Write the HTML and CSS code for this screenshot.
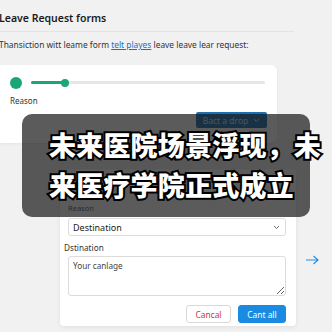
FILE: index.html
```html
<!DOCTYPE html>
<html lang="zh">
<head>
<meta charset="utf-8">
<link rel="stylesheet" href="styles.css">
</head>
<body>
<div class="page">
  <header class="head">
    <h1 class="title">Leave Request forms</h1>
    <p class="intro">Thansiction witt leame form <a class="link" href="#">telt playes</a> leave leave lear request:</p>
  </header>

  <section class="card">
    <div class="slider">
      <span class="dot"></span>
      <div class="track"><div class="fill"></div><span class="thumb"></span></div>
    </div>
    <div class="card-label">Reason</div>
    <div class="card-foot">
      <button class="drop-btn">Bact a drop <svg class="chev" width="7" height="5" viewBox="0 0 7 5"><path d="M1 1l2.5 2.5L6 1" fill="none" stroke="currentColor" stroke-width="1"/></svg></button>
    </div>
  </section>

  <div class="modal-row">
    <section class="modal">
      <div class="field-label">Reason</div>
      <div class="select">
        <span>Destination</span>
        <svg width="7" height="5" viewBox="0 0 7 5"><path d="M1 1l2.5 2.5L6 1" fill="none" stroke="#666" stroke-width="0.9"/></svg>
      </div>
      <div class="field-label dark">Dstination</div>
      <textarea class="area">Your canlage</textarea>
      <div class="actions">
        <button class="btn cancel">Cancal</button>
        <button class="btn primary">Cant all</button>
      </div>
    </section>
    <svg class="arrow" width="14" height="10" viewBox="0 0 14 10"><path d="M1 5h12M8.5 1L13 5l-4.5 4" fill="none" stroke="#2a8fe0" stroke-width="1.2"/></svg>
  </div>

  <div class="overlay"></div>
  <div class="caption">
    <span class="cap-line">未来医院场景浮现，未</span>
    <span class="cap-line">来医疗学院正式成立</span>
  </div>
</div>
</body>
</html>
```

FILE: styles.css
```css
* { box-sizing: border-box; }
html, body { margin: 0; padding: 0; }
body {
  width: 332px;
  height: 332px;
  overflow: hidden;
  background: #f1f1f1;
  font-family: "Noto Sans", "Open Sans", sans-serif;
  color: #222;
}
.page { position: relative; width: 332px; height: 332px; }

.head { width: 295px; margin-left: -1px; }
.title {
  margin: 0;
  padding-top: 11px;
  padding-bottom: 6px;
  font-size: 10.5px;
  font-weight: 600;
  line-height: 14px;
  border-bottom: 1px solid #e4e4e4;
  color: #1b1b1b;
}
.intro {
  margin: 0;
  padding-top: 7px;
  font-size: 8.4px;
  line-height: 12px;
  color: #333;
}
.link { color: #1b70c4; text-decoration: underline; }

.card {
  margin-top: 14px;
  width: 277px;
  height: 78px;
  background: #fff;
  border-radius: 0 6px 6px 0;
  box-shadow: 0 1px 3px rgba(0,0,0,0.06);
  padding: 11px 12px 0 10px;
  display: flex;
  flex-direction: column;
}
.slider { display: flex; align-items: center; gap: 9px; height: 13px; }
.dot { width: 12px; height: 12px; border-radius: 50%; background: #1ba67a; }
.track { position: relative; flex: 1; height: 3px; background: #e6e6e6; border-radius: 2px; }
.fill { width: 35px; height: 3px; background: #1ba67a; border-radius: 2px; }
.thumb { position: absolute; left: 30px; top: -2.5px; width: 8px; height: 8px; border-radius: 50%; background: #1ba67a; }
.card-label { margin-top: 7px; font-size: 8px; color: #333; line-height: 10px; }
.card-foot { display: flex; justify-content: flex-end; margin-top: 6px; }
.drop-btn {
  width: 71px; height: 16px;
  border: 0; border-radius: 2px;
  background: #1d6fb0;
  color: #cfe3f3;
  font-family: inherit;
  font-size: 8.5px;
  display: flex; align-items: center; justify-content: center; gap: 5px;
  padding: 0;
  margin-right: -2px;
}
.chev { margin-top: 1px; }

.modal-row { display: flex; margin-top: 26px; margin-left: 60px; gap: 9px; }
.modal {
  width: 236px;
  height: 157px;
  background: #fff;
  border-radius: 4px;
  box-shadow: 0 1px 4px rgba(0,0,0,0.08);
  padding: 34px 10px 0 8px;
  display: flex;
  flex-direction: column;
}
.field-label { font-size: 7.5px; line-height: 10px; color: #555; }
.field-label.dark { color: #333; font-size: 8.2px; margin-top: 7px; margin-left: -4px; }
.select {
  margin-top: 5px;
  height: 18px;
  border: 1px solid #dcdcdc;
  border-radius: 3px;
  display: flex; align-items: center; justify-content: space-between;
  padding: 0 5px 0 4px;
  font-size: 9px;
  color: #222;
}
.area {
  margin-top: 3px;
  width: 218px;
  height: 40px;
  border: 1px solid #dcdcdc;
  border-radius: 3px;
  padding: 3px 4px;
  font-family: inherit;
  font-size: 8.2px;
  line-height: 11px;
  color: #444;
  resize: vertical;
  outline: none;
}
.actions { display: flex; justify-content: flex-end; gap: 7px; margin-top: 9px; }
.btn {
  height: 18px;
  border-radius: 3px;
  font-family: inherit;
  font-size: 8.4px;
  padding: 0;
}
.cancel { width: 45px; background: #fff; border: 1px solid #d8d8d8; color: #d03434; }
.primary { width: 48px; background: #1a8be2; border: 1px solid #1a8be2; color: #fff; }
.arrow { margin-top: 86px; }

.overlay {
  position: absolute;
  left: 22px; top: 114px;
  width: 288px; height: 103px;
  border-radius: 10px;
  background: rgba(24,24,24,0.71);
}
.caption {
  position: absolute;
  left: 49px; top: 130px;
  display: flex;
  flex-direction: column;
  gap: 10px;
  font-family: "Noto Sans CJK SC", sans-serif;
  font-weight: 900;
  font-size: 27px;
  line-height: 30px;
  color: #fff;
  white-space: nowrap;
  letter-spacing: 0.2px;
  -webkit-text-stroke: 4px #000;
  paint-order: stroke fill;
}
.cap-line { display: block; }
```
